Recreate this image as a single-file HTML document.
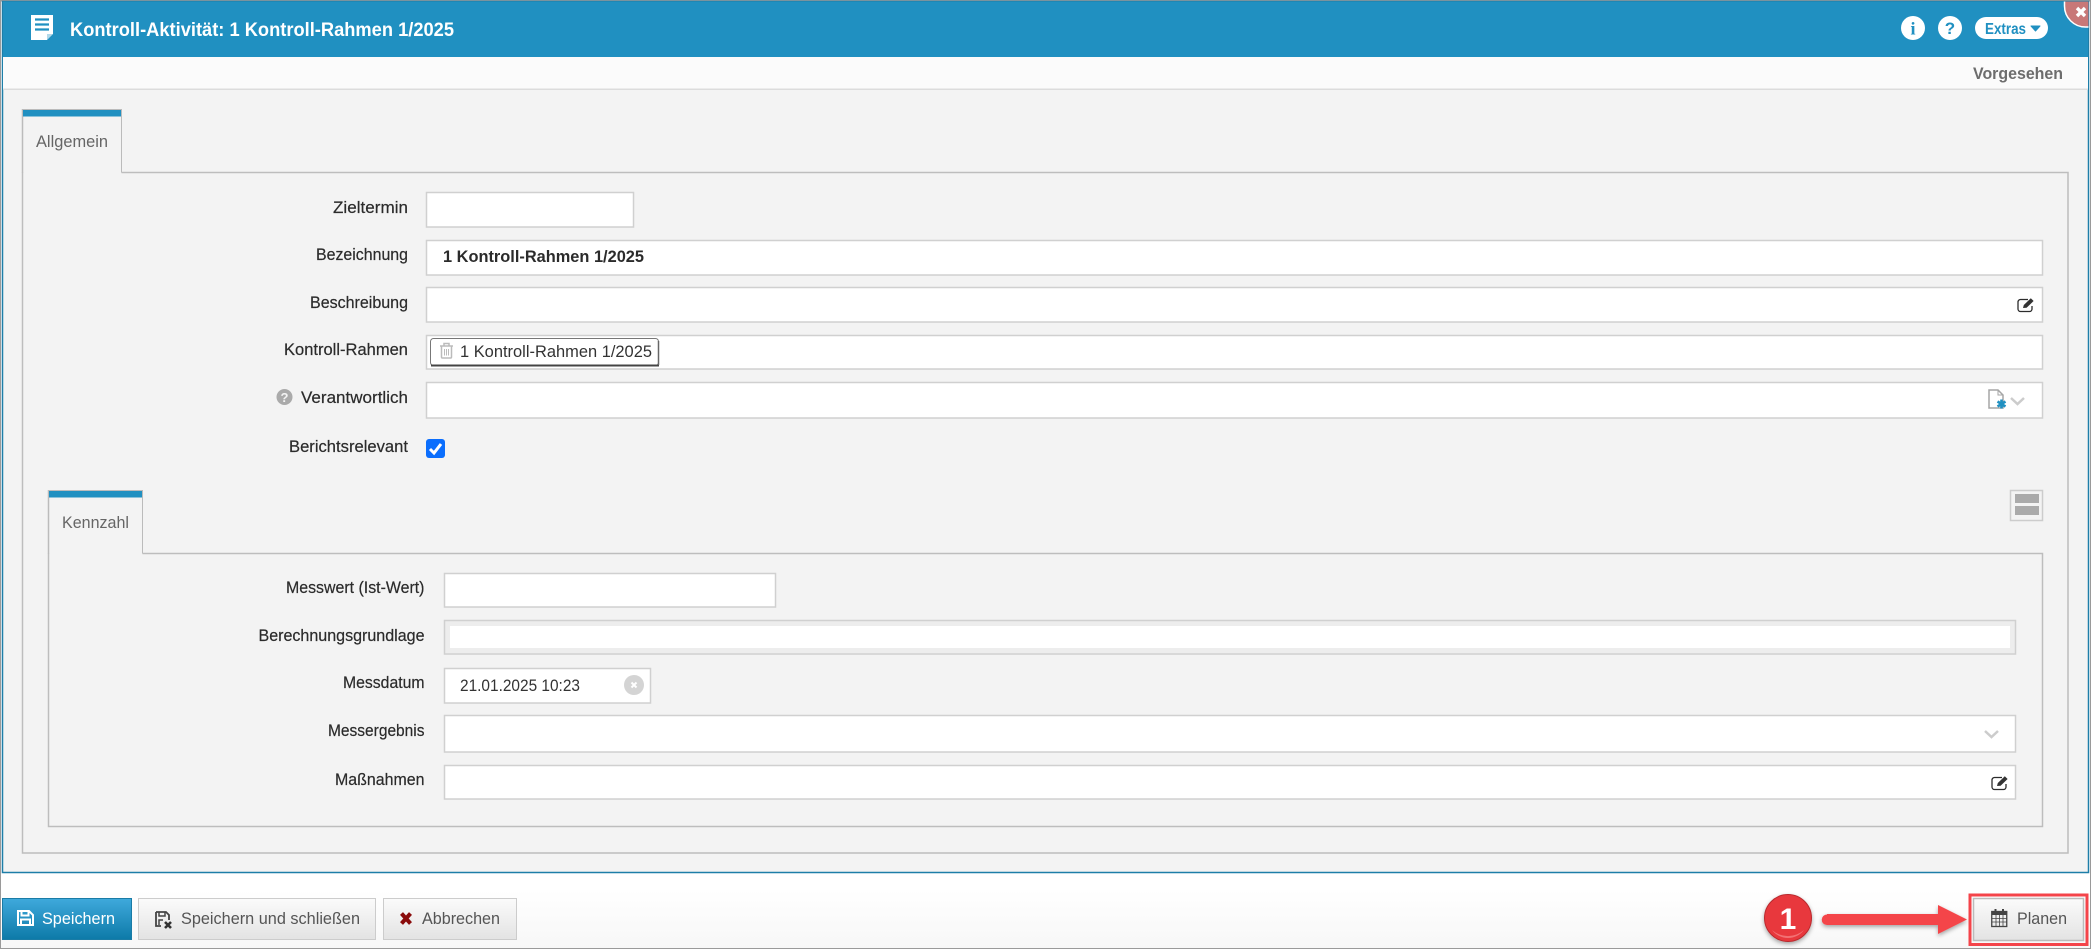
<!DOCTYPE html>
<html lang="de"><head><meta charset="utf-8"><title>Kontroll-Aktivität</title>
<style>
html,body{margin:0;padding:0;background:#fff;width:2091px;height:949px;overflow:hidden}
svg{display:block}
text{font-family:"Liberation Sans",sans-serif}
.l{font-size:16.5px;fill:#2b2b2b;stroke:#2b2b2b;stroke-width:.2px}
.t{font-size:16.5px;fill:#666}
.v{font-size:16.5px;fill:#333}
.b{font-size:17px;fill:#555}
.in{fill:#fff;stroke:#d0d0d0;stroke-width:1.5}
.tabline{fill:none;stroke:#bdbdbd;stroke-width:1.5}
</style></head><body>
<svg width="2091" height="949" viewBox="0 0 2091 949" xmlns="http://www.w3.org/2000/svg">
<defs>
<linearGradient id="gb" x1="0" y1="0" x2="0" y2="1"><stop offset="0" stop-color="#3fa9dc"/><stop offset="1" stop-color="#0d7aa8"/></linearGradient>
<linearGradient id="gg" x1="0" y1="0" x2="0" y2="1"><stop offset="0" stop-color="#fbfbfb"/><stop offset="1" stop-color="#e3e3e3"/></linearGradient>
<linearGradient id="gf" x1="0" y1="0" x2="0" y2="1"><stop offset="0" stop-color="#fff"/><stop offset="1" stop-color="#f7f7f7"/></linearGradient>
<filter id="sh" x="-20%" y="-30%" width="140%" height="170%"><feDropShadow dx="0" dy="2" stdDeviation="2" flood-color="#000" flood-opacity=".35"/></filter>
</defs>

<!-- screenshot frame -->
<rect x="0" y="0" width="2091" height="949" fill="#fff"/>
<rect x="0" y="890" width="2091" height="59" fill="url(#gf)"/>
<rect x="0" y="0" width="2091" height="1.5" fill="#9a9a9a"/>
<rect x="0" y="0" width="1" height="949" fill="#9a9a9a"/>
<rect x="2090" y="0" width="1" height="949" fill="#9a9a9a"/>
<rect x="0" y="948" width="2091" height="1" fill="#9a9a9a"/>

<!-- window -->
<rect x="2.5" y="1.5" width="2086" height="871" fill="#f3f3f3" stroke="#1d7ea8" stroke-width="1.5"/>
<rect x="3" y="1.5" width="2085" height="55.5" fill="#2090c1"/>
<rect x="3" y="57" width="2085" height="32" fill="#fbfbfb"/>
<rect x="3" y="88.5" width="2085" height="1.5" fill="#dcdcdc"/>

<!-- header -->
<path d="M31 15h22v19l-6 6H31z" fill="#fff"/>
<path d="M47 40v-6h6z" fill="#2090c1" opacity=".35"/>
<path d="M35 19.5h14M35 24.5h14M35 29.5h14" stroke="#2090c1" stroke-width="2.2" fill="none"/>
<text x="70" y="36" font-size="19.5" font-weight="700" fill="#fff" textLength="384" lengthAdjust="spacingAndGlyphs">Kontroll-Aktivität: 1 Kontroll-Rahmen 1/2025</text>

<circle cx="1913" cy="28" r="12" fill="#fff"/>
<text x="1913" y="34.5" font-size="18" font-weight="700" fill="#2090c1" text-anchor="middle" style="font-family:'Liberation Serif',serif">i</text>
<circle cx="1950" cy="28" r="12" fill="#fff"/>
<text x="1950" y="34" font-size="17" font-weight="700" fill="#2090c1" text-anchor="middle">?</text>
<rect x="1975" y="17" width="73" height="22" rx="11" fill="#fff"/>
<text x="1985" y="34" font-size="15.5" font-weight="700" fill="#2090c1" textLength="41" lengthAdjust="spacingAndGlyphs">Extras</text>
<path d="M2031 26h9l-4.500 5z" fill="#2090c1" stroke="#2090c1" stroke-linejoin="round"/>
<path d="M2064.5 1.5V6a21 21 0 0 0 21 21h3V1.5z" fill="#c87878" stroke="none"/>
<path d="M2064.5 1.5V6a21 21 0 0 0 21 21h3" fill="none" stroke="#fff" stroke-width="1.5"/>
<path d="M2077 8l8 8M2085 8l-8 8" stroke="#fff" stroke-width="3.4" fill="none"/>

<text x="1973" y="79" font-size="17" font-weight="700" fill="#6d6d6d" textLength="90" lengthAdjust="spacingAndGlyphs">Vorgesehen</text>

<!-- outer tab panel -->
<path class="tabline" d="M121.5 172.5H2068V853H22.5V172.5"/>
<path d="M22.5 109.500H121.500V172.500" fill="none" stroke="#bbb" stroke-width="1"/>
<path d="M22.500 109V173" fill="none" stroke="#bbb" stroke-width="1.500"/>
<rect x="23" y="110" width="98" height="6.500" fill="#2090c1"/>
<text class="t" x="36" y="147" textLength="72" lengthAdjust="spacingAndGlyphs">Allgemein</text>

<!-- form 1 -->
<rect class="in" x="426.500" y="192.500" width="207" height="34.500"/>
<text class="l" x="333" y="213" textLength="75" lengthAdjust="spacingAndGlyphs">Zieltermin</text>

<rect class="in" x="426.500" y="240.500" width="1616" height="34.500"/>
<text class="l" x="316" y="260" textLength="92" lengthAdjust="spacingAndGlyphs">Bezeichnung</text>
<text x="443" y="262" font-size="16.500" font-weight="700" fill="#2b2b2b" textLength="201" lengthAdjust="spacingAndGlyphs">1 Kontroll-Rahmen 1/2025</text>

<rect class="in" x="426.500" y="287.500" width="1616" height="34.500"/>
<text class="l" x="310" y="308" textLength="98" lengthAdjust="spacingAndGlyphs">Beschreibung</text>
<g transform="translate(2017 297)">
<path d="M11 2.500H3.500A2.500 2.500 0 0 0 1 5v7a2.500 2.500 0 0 0 2.500 2.500h9A2.500 2.500 0 0 0 15 12V9" fill="none" stroke="#2c2c2c" stroke-width="1.300"/>
<path d="M6 11l.8-3 7-6.800 2.800 2.800-7 6.800z" fill="#333"/>
</g>

<rect class="in" x="426.500" y="335.500" width="1616" height="33.500"/>
<text class="l" x="284" y="355" textLength="124" lengthAdjust="spacingAndGlyphs">Kontroll-Rahmen</text>
<rect x="430.500" y="338.500" width="228" height="27" rx="3" fill="#fff" stroke="#777" stroke-width="1"/>
<path d="M431 365.500h228" stroke="#444" stroke-width="2"/>
<path d="M658.500 341v24" stroke="#666" stroke-width="1.500"/>
<g fill="none" stroke="#bbb" stroke-width="1.500">
<path d="M440 346h13M441.500 346.500v10.500a1 1 0 0 0 1 1h8a1 1 0 0 0 1-1v-10.500M444 346v-2.500h5v2.500"/>
<path d="M444.500 349v6.500M446.500 349v6.500M448.500 349v6.500" stroke-width="1"/>
</g>
<text class="v" x="460" y="357" textLength="192" lengthAdjust="spacingAndGlyphs">1 Kontroll-Rahmen 1/2025</text>

<rect class="in" x="426.500" y="382.500" width="1616" height="35.500"/>
<circle cx="284.500" cy="397" r="8" fill="#aaa"/>
<text x="284.500" y="402" font-size="13" font-weight="700" fill="#f3f3f3" text-anchor="middle">?</text>
<text class="l" x="301" y="403" textLength="107" lengthAdjust="spacingAndGlyphs">Verantwortlich</text>
<g transform="translate(1988 389)">
<path d="M1 1h9l5 5v13H1z" fill="#fff" stroke="#a5a5a5" stroke-width="1.500"/>
<path d="M10 1v5h5" fill="none" stroke="#a5a5a5" stroke-width="1"/>
<path d="M13.500 10.500v9M9.500 12.500l8 5M17.500 12.500l-8 5" stroke="#2090c1" stroke-width="2.600" fill="none"/>
</g>
<path d="M2011 398l6.500 6 6.500-6" fill="none" stroke="#ccc" stroke-width="2.500"/>

<rect x="426" y="439" width="19" height="19" rx="3" fill="#0b6efd"/>
<path d="M430 449l4 4 7-9" fill="none" stroke="#fff" stroke-width="3"/>
<text class="l" x="289" y="452" textLength="119" lengthAdjust="spacingAndGlyphs">Berichtsrelevant</text>

<!-- inner tab panel -->
<path class="tabline" d="M142.500 553.500H2042.500V826.500H48.500V553.500"/>
<path d="M49 490.500H142.500V553.500" fill="none" stroke="#bbb" stroke-width="1"/>
<path d="M48.500 490V554" fill="none" stroke="#bbb" stroke-width="1.500"/>
<rect x="49" y="491" width="93" height="6.500" fill="#2090c1"/>
<text class="t" x="62" y="528" textLength="67" lengthAdjust="spacingAndGlyphs">Kennzahl</text>

<rect x="2010.500" y="490.500" width="32" height="30" fill="#f3f3f3" stroke="#ccc" stroke-width="1.500"/>
<rect x="2015" y="494" width="24" height="9" fill="#aaa"/>
<rect x="2015" y="506" width="24" height="9" fill="#aaa"/>

<!-- form 2 -->
<rect class="in" x="444.500" y="573.500" width="331" height="33.500"/>
<text class="l" x="286" y="593" textLength="138.500" lengthAdjust="spacingAndGlyphs">Messwert (Ist-Wert)</text>

<rect x="444.500" y="620.500" width="1571" height="33.500" fill="#ededed" stroke="#d0d0d0" stroke-width="1.500"/>
<rect x="450" y="626" width="1560" height="22" fill="#fff"/>
<text class="l" x="258.500" y="641" textLength="166" lengthAdjust="spacingAndGlyphs">Berechnungsgrundlage</text>

<rect class="in" x="444.500" y="668.500" width="206" height="34.500"/>
<text class="l" x="343" y="688" textLength="81.500" lengthAdjust="spacingAndGlyphs">Messdatum</text>
<text class="v" x="460" y="691" textLength="120" lengthAdjust="spacingAndGlyphs">21.01.2025 10:23</text>
<circle cx="634" cy="685" r="10" fill="#d4d4d4"/>
<path d="M631.500 682.500l5 5M636.500 682.500l-5 5" stroke="#fff" stroke-width="2" fill="none"/>

<rect class="in" x="444.500" y="715.500" width="1571" height="36.500"/>
<text class="l" x="328" y="736" textLength="96.500" lengthAdjust="spacingAndGlyphs">Messergebnis</text>
<path d="M1985 731l6.500 6 6.500-6" fill="none" stroke="#ccc" stroke-width="2.500"/>

<rect class="in" x="444.500" y="765.500" width="1571" height="33.500"/>
<text class="l" x="335" y="785" textLength="89.500" lengthAdjust="spacingAndGlyphs">Maßnahmen</text>
<g transform="translate(1991 775)">
<path d="M11 2.500H3.500A2.500 2.500 0 0 0 1 5v7a2.500 2.500 0 0 0 2.500 2.500h9A2.500 2.500 0 0 0 15 12V9" fill="none" stroke="#2c2c2c" stroke-width="1.300"/>
<path d="M6 11l.8-3 7-6.800 2.800 2.800-7 6.800z" fill="#333"/>
</g>

<!-- footer buttons -->
<rect x="2.500" y="898.500" width="129" height="41" fill="url(#gb)" stroke="#1a7ca6"/>
<g transform="translate(17 910)" fill="none" stroke="#fff" stroke-width="2">
<path d="M1 1h11l4 4v10H1z"/><path d="M4.500 1v4.500h7V1M4 15V9.500h9V15"/>
</g>
<text x="42" y="924" font-size="17" fill="#fff" textLength="73" lengthAdjust="spacingAndGlyphs">Speichern</text>

<rect x="138.500" y="898.500" width="237" height="41" fill="url(#gg)" stroke="#ccc"/>
<g transform="translate(155 911)">
<path d="M1 1h10l3 3v5M6 15H1V1" fill="none" stroke="#444" stroke-width="1.800"/>
<path d="M4 1v4h6V1M4 14V9h4" fill="none" stroke="#444" stroke-width="1.500"/>
<path d="M10 11l6 6M16 11l-6 6" stroke="#333" stroke-width="2.600" fill="none"/>
</g>
<text class="b" x="181" y="924" textLength="179" lengthAdjust="spacingAndGlyphs">Speichern und schließen</text>

<rect x="383.500" y="898.500" width="133" height="41" fill="url(#gg)" stroke="#ccc"/>
<path d="M401.500 913.500l9 10M410.500 913.500l-9 10" stroke="#8a0b0b" stroke-width="4" fill="none"/>
<text class="b" x="422" y="924" textLength="78" lengthAdjust="spacingAndGlyphs">Abbrechen</text>

<!-- Planen with annotation -->
<rect x="1973.500" y="898.500" width="110" height="42" fill="url(#gg)" stroke="#bbb" stroke-width="1.500"/>
<rect x="1970" y="895" width="117" height="49.500" fill="none" stroke="#f4444a" stroke-width="3"/>
<g transform="translate(1991 909)" fill="none" stroke="#444">
<rect x=".75" y="2.500" width="15" height="15" stroke-width="1.300"/>
<path d="M1 3h14.500v2.500H1z" fill="#444"/>
<path d="M4.500 0v4M12 0v4" stroke-width="2"/>
<path d="M5 6v11M8.500 6v11M12 6v11M1 9.500h15M1 13h15" stroke-width=".8"/>
</g>
<text class="b" x="2017" y="924" textLength="50" lengthAdjust="spacingAndGlyphs">Planen</text>

<g filter="url(#sh)">
<path d="M1827 914h111v-9l29 14.500-29 14.500v-9h-111a5 5 0 0 1 0-10.500z" fill="#f4444a"/>
</g>
<g filter="url(#sh)">
<circle cx="1788" cy="918" r="23.500" fill="#e8383e" stroke="#b92a2e" stroke-width="1"/>
</g>
<path d="M1772 930a20 20 0 0 0 32 0a24 24 0 0 1-32 0z" fill="#f68a8c" opacity=".7"/>
<text x="1788" y="929" font-size="30" font-weight="700" fill="#fff" text-anchor="middle">1</text>
</svg>
</body></html>
